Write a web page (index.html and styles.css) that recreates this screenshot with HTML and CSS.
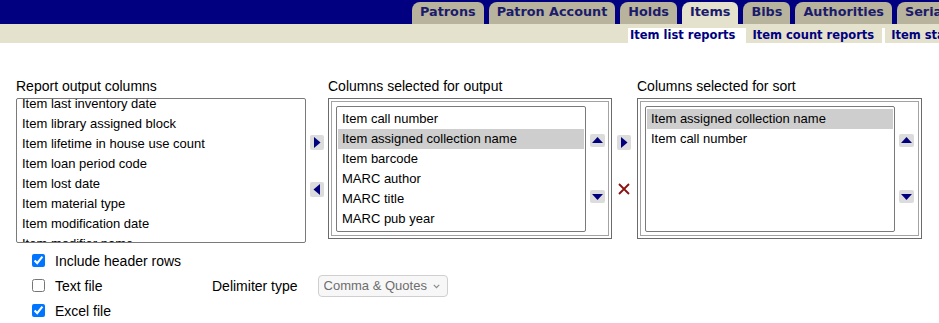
FILE: index.html
```html
<!DOCTYPE html>
<html lang="en">
<head>
<meta charset="utf-8">
<title>Item list reports</title>
<link rel="stylesheet" href="styles.css">
</head>
<body>
<header class="topnav">
  <nav class="tabs">
    <a class="tab">Patrons</a>
    <a class="tab">Patron Account</a>
    <a class="tab">Holds</a>
    <a class="tab active">Items</a>
    <a class="tab">Bibs</a>
    <a class="tab">Authorities</a>
    <a class="tab">Serials</a>
  </nav>
  <nav class="subtabs">
    <a class="subtab active">Item list reports</a>
    <a class="subtab">Item count reports</a>
    <a class="subtab">Item statistics</a>
  </nav>
</header>
<main class="report">
  <div class="columns">
    <div class="col-label c1">Report output columns</div>
    <div class="col-label c3">Columns selected for output</div>
    <div class="col-label c5">Columns selected for sort</div>

    <div class="listbox source">
      <ul>
        <li>Item last inventory date</li>
        <li>Item library assigned block</li>
        <li>Item lifetime in house use count</li>
        <li>Item loan period code</li>
        <li>Item lost date</li>
        <li>Item material type</li>
        <li>Item modification date</li>
        <li>Item modifier name</li>
      </ul>
    </div>

    <div class="move-col m1">
      <svg class="btn" width="14" height="15" viewBox="0 0 14 15"><rect width="14" height="15" rx="2" fill="#dcdcdc"/><path d="M4 2 L10.5 7.5 L4 13 Z" fill="#00007f"/></svg>
      <svg class="btn" width="14" height="15" viewBox="0 0 14 15"><rect width="14" height="15" rx="2" fill="#dcdcdc"/><path d="M10 2 L3.5 7.5 L10 13 Z" fill="#00007f"/></svg>
    </div>

    <div class="panel p3">
      <div class="panel-inner">
        <div class="listbox">
          <ul>
            <li>Item call number</li>
            <li class="selected">Item assigned collection name</li>
            <li>Item barcode</li>
            <li>MARC author</li>
            <li>MARC title</li>
            <li>MARC pub year</li>
          </ul>
        </div>
        <div class="order-col">
          <svg class="btn" width="15" height="13" viewBox="0 0 15 13"><rect width="15" height="13" rx="2" fill="#dcdcdc"/><path d="M2 9 L7.5 3 L13 9 Z" fill="#00007f"/></svg>
          <svg class="btn" width="15" height="13" viewBox="0 0 15 13"><rect width="15" height="13" rx="2" fill="#dcdcdc"/><path d="M2 4 L13 4 L7.5 10 Z" fill="#00007f"/></svg>
        </div>
      </div>
    </div>

    <div class="move-col m2">
      <svg class="btn" width="14" height="15" viewBox="0 0 14 15"><rect width="14" height="15" rx="2" fill="#dcdcdc"/><path d="M4 2 L10.5 7.5 L4 13 Z" fill="#00007f"/></svg>
      <svg class="btn" width="14" height="14" viewBox="0 0 14 14"><path d="M2 2 L12 12 M12 2 L2 12" stroke="#8b1212" stroke-width="1.8" fill="none"/></svg>
    </div>

    <div class="panel p5">
      <div class="panel-inner">
        <div class="listbox">
          <ul>
            <li class="selected">Item assigned collection name</li>
            <li>Item call number</li>
          </ul>
        </div>
        <div class="order-col">
          <svg class="btn" width="15" height="13" viewBox="0 0 15 13"><rect width="15" height="13" rx="2" fill="#dcdcdc"/><path d="M2 9 L7.5 3 L13 9 Z" fill="#00007f"/></svg>
          <svg class="btn" width="15" height="13" viewBox="0 0 15 13"><rect width="15" height="13" rx="2" fill="#dcdcdc"/><path d="M2 4 L13 4 L7.5 10 Z" fill="#00007f"/></svg>
        </div>
      </div>
    </div>
  </div>

  <div class="options">
    <div class="opt-row">
      <label class="check"><input type="checkbox" checked><span>Include header rows</span></label>
    </div>
    <div class="opt-row">
      <label class="check fixed"><input type="checkbox"><span>Text file</span></label>
      <span class="delim-label">Delimiter type</span>
      <span class="select-wrap">
        <select class="delim" aria-disabled="true"><option>Comma &amp; Quotes</option></select>
        <svg class="chev" width="7" height="5" viewBox="0 0 7 5"><path d="M0.8 0.8 L3.5 3.6 L6.2 0.8" stroke="#8a8a8a" stroke-width="1.2" fill="none"/></svg>
      </span>
    </div>
    <div class="opt-row">
      <label class="check"><input type="checkbox" checked><span>Excel file</span></label>
    </div>
  </div>
</main>
</body>
</html>
```

FILE: styles.css
```css
html, body {
  margin: 0;
  padding: 0;
  background: #fff;
}
body {
  font-family: "Liberation Sans", Arial, sans-serif;
  color: #000;
  overflow: hidden;
}

/* top tabs */
.tabs {
  display: flex;
  align-items: flex-end;
  gap: 5px;
  height: 24px;
  box-sizing: border-box;
  padding-left: 412px;
  background: #000080;
  overflow: hidden;
  white-space: nowrap;
}
.tab {
  flex: none;
  height: 22px;
  box-sizing: border-box;
  padding: 2px 8px 0;
  line-height: 20px;
  background: #b8b39c;
  color: #1b1b6b;
  font: bold 12.8px "DejaVu Sans", Verdana, sans-serif;
  border-radius: 8px 6px 0 0;
  text-decoration: none;
}
.tab.active {
  background: #e4e1cc;
}

/* sub tabs */
.subtabs {
  display: flex;
  height: 19px;
  box-sizing: border-box;
  padding-left: 628px;
  background: #e4e1cc;
  overflow: hidden;
  white-space: nowrap;
}
.subtab {
  flex: none;
  margin-top: 4px;
  height: 15px;
  line-height: 15px;
  padding: 0 8px 0 6px;
  border-left: 3px solid #fff;
  font: bold 11.5px "DejaVu Sans", Verdana, sans-serif;
  color: #000080;
  text-decoration: none;
}
.subtab.active {
  border-left: 0;
  padding-left: 2px;
  background: #fff;
}

/* report body */
.report {
  padding: 35px 0 0 16px;
}
.columns {
  display: grid;
  grid-template-columns: 290px 22px 284px 25px 285px;
  grid-template-rows: 16px auto;
  row-gap: 4px;
  align-items: start;
}
.col-label {
  grid-row: 1;
  font-size: 14px;
  line-height: 16px;
  white-space: nowrap;
}
.c1 { grid-column: 1; }
.c3 { grid-column: 3; }
.c5 { grid-column: 5; }
.source { grid-row: 2; grid-column: 1; }
.m1 { grid-row: 2; grid-column: 2; }
.p3 { grid-row: 2; grid-column: 3; }
.m2 { grid-row: 2; grid-column: 4; }
.p5 { grid-row: 2; grid-column: 5; }

.listbox {
  box-sizing: border-box;
  border: 1px solid #7a7a7a;
  border-radius: 2px;
  background: #fff;
  overflow: hidden;
  font-size: 13px;
}
.listbox ul {
  list-style: none;
  margin: 0;
  padding: 2px 1px;
}
.listbox li {
  line-height: 20px;
  padding: 0 4px;
  white-space: nowrap;
}
.listbox li.selected {
  background: #cecece;
}
.listbox.source {
  width: 290px;
  height: 145px;
}
.listbox.source ul {
  margin-top: -7px;
}

.panel {
  border: 1px solid #6b6b6b;
  padding: 2px;
}
.panel-inner {
  display: flex;
  gap: 4px;
  border: 1px solid #a3a3a3;
  padding: 4px 3px 3px 4px;
}
.panel .listbox {
  width: 250px;
  height: 126px;
  flex: none;
}
.order-col {
  display: flex;
  flex-direction: column;
  padding-top: 28px;
  gap: 43px;
}
.move-col {
  display: flex;
  flex-direction: column;
  padding-top: 37px;
  gap: 32px;
}
.m1 { padding-left: 4px; }
.m2 { padding-left: 5px; }
.btn {
  display: block;
}

/* options */
.options {
  margin-top: 5px;
}
.opt-row {
  display: flex;
  align-items: center;
  height: 25px;
  padding-left: 16px;
  font-size: 14px;
}
.check {
  display: flex;
  align-items: center;
  gap: 10px;
}
.check.fixed {
  width: 180px;
}
.check input {
  margin: 0;
  width: 13px;
  height: 13px;
}
.delim-label {
  margin-right: 20px;
}
.select-wrap {
  position: relative;
  display: inline-block;
  height: 22px;
}
select.delim {
  -webkit-appearance: none;
  appearance: none;
  box-sizing: border-box;
  width: 130px;
  height: 22px;
  margin: 0;
  padding: 0 18px 0 5px;
  font: 13px "Liberation Sans", Arial, sans-serif;
  color: #6d6d6d;
  background-color: #f7f7f7;
  border: 1px solid #cfcfcf;
  border-radius: 4px;
}
.chev {
  position: absolute;
  right: 8px;
  top: 9px;
  pointer-events: none;
}
```
